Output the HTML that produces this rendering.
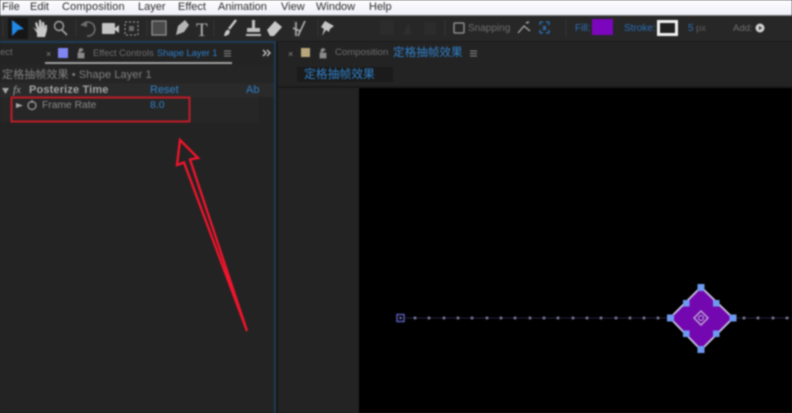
<!DOCTYPE html>
<html>
<head>
<meta charset="utf-8">
<style>
html,body{margin:0;padding:0;width:792px;height:413px;overflow:hidden;background:#232323}
#r{position:relative;width:792px;height:413px;overflow:hidden;background:#232323;font-family:"Liberation Sans","Noto Sans CJK SC",sans-serif;filter:blur(.7px)}
#r div{position:absolute;white-space:nowrap}
.m{top:0;font-size:11px;line-height:15px;color:#2c2c2c}
.g{color:#8b8b8b;font-size:9.5px}
.b{color:#2f7fc8;font-size:10px}
svg{position:absolute;left:0;top:0}
</style>
</head>
<body>
<div id="r">
  <div style="left:0;top:0;width:792px;height:15px;background:linear-gradient(#fdfdfe,#eeeef8)"></div>
  <div style="left:0;top:15px;width:792px;height:1px;background:#777"></div>
  <div style="left:0;top:16px;width:792px;height:25px;background:#272727"></div>

  <div class="m" style="left:2px">File</div>
  <div class="m" style="left:30px">Edit</div>
  <div class="m" style="left:62px;letter-spacing:.15px">Composition</div>
  <div class="m" style="left:138px">Layer</div>
  <div class="m" style="left:178px">Effect</div>
  <div class="m" style="left:218px">Animation</div>
  <div class="m" style="left:281px">View</div>
  <div class="m" style="left:316px">Window</div>
  <div class="m" style="left:369px">Help</div>

  <div style="left:0;top:41px;width:275px;height:2px;background:#1c3c58"></div>
  <div style="left:274px;top:41px;width:2px;height:372px;background:#1c3c58"></div>
  <div style="left:276px;top:41px;width:516px;height:1px;background:#1a1a1a"></div>
  <div style="left:276px;top:42px;width:2px;height:371px;background:#171717"></div>
  <div style="left:278px;top:86px;width:514px;height:2px;background:#1a1a1a"></div>
  <div style="left:359px;top:88px;width:433px;height:325px;background:#000"></div>

  <div class="g" style="left:0;top:47px;color:#6f6f6f;line-height:12px">ect</div>
  <div class="g" style="left:46px;top:48px;font-size:9px;line-height:12px">×</div>
  <div style="left:58px;top:48px;width:10px;height:10px;background:#7f86f2"></div>
  <div class="g" style="left:93px;top:47px;line-height:12px;color:#6e6e6e;font-size:9.3px">Effect Controls</div>
  <div class="b" style="left:157px;top:47px;line-height:12px;font-size:9.3px">Shape Layer 1</div>
  <div style="left:45px;top:62px;width:187px;height:2px;background:#a0a0a0"></div>
  <div style="left:0;top:65px;width:274px;height:18px;background:#252525"></div>
  <div class="g" style="left:2px;top:69px;line-height:13px;font-size:11px;color:#808080;letter-spacing:.1px">定格抽帧效果 • Shape Layer 1</div>
  <div style="left:0;top:83px;width:274px;height:14px;background:#2a2a2a"></div>
  <div style="left:0;top:97px;width:258px;height:25px;background:#262626"></div>
  <div style="left:13px;top:84px;font:italic 11px 'Liberation Serif',serif;line-height:13px;color:#a8a8a8">fx</div>
  <div style="left:29px;top:84px;font-size:11px;font-weight:bold;line-height:13px;color:#a5a5a5;letter-spacing:.15px">Posterize Time</div>
  <div class="b" style="left:150px;top:84px;line-height:13px;font-size:11px">Reset</div>
  <div class="b" style="left:246px;top:84px;line-height:13px;font-size:11px">Ab</div>
  <div class="g" style="left:42px;top:99px;font-size:10.3px;line-height:13px">Frame Rate</div>
  <div class="b" style="left:150px;top:99px;line-height:13px;font-size:10.5px">8.0</div>
  <div class="g" style="left:288px;top:48px;font-size:9px;line-height:12px">×</div>
  <div style="left:301px;top:48px;width:9px;height:9px;background:#b9a67c"></div>
  <div class="g" style="left:335px;top:47px;line-height:12px;color:#6e6e6e;font-size:9.6px">Composition</div>
  <div class="b" style="left:393px;top:46px;line-height:14px;font-size:11.6px">定格抽帧效果</div>
  <div style="left:297px;top:67px;width:96px;height:15px;background:#1b1b1b"></div>
  <div class="b" style="left:304px;top:67px;line-height:14px;font-size:11.8px">定格抽帧效果</div>

  <div class="g" style="left:468px;top:22px;line-height:13px;font-size:10px;color:#6e6e6e">Snapping</div>
  <div class="b" style="left:575px;top:22px;line-height:13px;color:#2a6db5">Fill:</div>
  <div style="left:592px;top:19px;width:21px;height:16px;background:#7b06bd"></div>
  <div class="b" style="left:624px;top:22px;line-height:13px;color:#2a6db5">Stroke:</div>
  <div style="left:657px;top:20px;width:15px;height:10px;border:3px solid #f2f2f2;background:#222"></div>
  <div class="b" style="left:688px;top:22px;line-height:13px;color:#2a6db5">5</div>
  <div class="g" style="left:696px;top:22px;line-height:13px;color:#5e5e5e">px</div>
  <div class="g" style="left:733px;top:22px;line-height:13px;color:#707070">Add:</div>

  <svg width="792" height="413" viewBox="0 0 792 413" fill="none">
    <path d="M3 20V36M76 20V36M147 20V36M214 20V36M294 20V36M318 20V36M445 20V36M566 20V36" stroke="#363636"/>
    <rect x="8" y="18" width="20" height="21" fill="#161616"/>
    <path d="M12 20L24 29L18 30L12 36Z" fill="#2088e6"/>
    <path d="M33 27L37 33V37H45L47 30V25L45 25V29L44 22L42 22V28L41 20H39V28L37 22L35 23L37 30Z" fill="#c9c9c9"/>
    <circle cx="59" cy="26" r="4.5" stroke="#a5a5a5" stroke-width="1.4"/>
    <path d="M62 30L67 35" stroke="#a5a5a5" stroke-width="1.6"/>
    <path d="M83 24A7 7 0 1 1 87 36" stroke="#6e6e6e" stroke-width="1.6"/>
    <path d="M80 25L87 21V27Z" fill="#6e6e6e"/>
    <rect x="102" y="23" width="13" height="11" rx="1" fill="#c5c5c5"/>
    <path d="M115 28L119 25V33L115 30Z" fill="#c5c5c5"/>
    <rect x="125" y="22" width="13" height="13" stroke="#aaa" stroke-dasharray="2 2"/>
    <rect x="129" y="26" width="5" height="5" fill="#6a6a6a"/>
    <rect x="152" y="21" width="14" height="14" fill="#4a4a4a" stroke="#8a8a8a" stroke-width="1.4"/>
    <path d="M176 35L178 26L185 20L189 25L184 32Z" fill="#b5b5b5"/>
    <text x="196" y="36" font-family="Liberation Serif,serif" font-size="19" fill="#b5b5b5">T</text>
    <path d="M236 20L229 29" stroke="#c8c8c8" stroke-width="2.4"/>
    <path d="M224 36C225 31 227 29 229 30C231 32 229 36 224 36Z" fill="#c8c8c8"/>
    <path d="M252 20H255V28H260V32H247V28H252ZM246 34H261V36H246Z" fill="#c0c0c0"/>
    <path d="M267 30L275 21L282 27L274 36H270Z" fill="#c8c8c8"/>
    <path d="M296 22V36M305 21L298 36M293 28L300 31" stroke="#b0b0b0" stroke-width="1.6"/>
    <path d="M325 21L334 26L330 29L329 32L326 30L322 36L324 29L321 27Z" fill="#c5c5c5"/>
    <path d="M408 23L412 35H403Z" fill="#2e2e2e"/>
    <rect x="424" y="22" width="12" height="13" fill="#2c2c2c"/>
    <rect x="380" y="20" width="14" height="15" fill="#2c2c2c"/>
    <rect x="454" y="23" width="10" height="10" rx="1" stroke="#8b8b8b" stroke-width="1.5"/>
    <path d="M518 33L524 26L530 31" stroke="#aaa" stroke-width="1.3"/>
    <path d="M526 23L529 22" stroke="#aaa" stroke-width="1.5"/>
    <path d="M540 22H543M546 22H549M540 33H543M546 33H549M540 22V25M549 22V25M540 30V33M549 30V33M543 26L546 30M546 26L543 30" stroke="#2a74c0" stroke-width="1.3"/>
    <circle cx="760" cy="28" r="4.5" fill="#d0d0d0"/>
    <path d="M759 26L762 28L759 30Z" fill="#333"/>
    <path d="M78 53V58H84V53ZM79 53V50.5A2 2 0 0 1 83 50.5" fill="#8a8a8a" stroke="#8a8a8a" stroke-width=".8"/>
    <path d="M320 53V58H326V53ZM321 53V50.5A2 2 0 0 1 325 50.5" fill="#8a8a8a" stroke="#8a8a8a" stroke-width=".8"/>
    <path d="M224 51H231M224 53.5H231M224 56H231" stroke="#888"/>
    <path d="M470 51H477M470 53.5H477M470 56H477" stroke="#888"/>
    <path d="M263 50L266 53L263 56M267 50L270 53L267 56" stroke="#c5c5c5" stroke-width="1.4"/>
    <path d="M2 88H9L5.500 94Z" fill="#a5a5a5"/>
    <path d="M16 103L23 105.500L16 108Z" fill="#aaa"/>
    <circle cx="32" cy="105.500" r="4" stroke="#999" stroke-width="1.3"/>
    <path d="M32 100V103" stroke="#999" stroke-width="1.3"/>

    <rect x="11.500" y="97.500" width="178" height="24" stroke="#c01c26" stroke-width="2"/>
    <path d="M180 140L198 158L190 159.500L247 331L184 162.500L177 165Z" stroke="#f0142c" stroke-width="2.300" stroke-linejoin="miter"/>

    <path d="M405 318H790" stroke="#23233c" stroke-width="1"/>
    <g fill="#7a7a98">
      <circle cx="415" cy="318" r="1.500"/><circle cx="429" cy="318" r="1.500"/><circle cx="444" cy="318" r="1.500"/><circle cx="458" cy="318" r="1.500"/><circle cx="472" cy="318" r="1.500"/><circle cx="487" cy="318" r="1.500"/><circle cx="501" cy="318" r="1.500"/><circle cx="515" cy="318" r="1.500"/><circle cx="530" cy="318" r="1.500"/><circle cx="544" cy="318" r="1.500"/><circle cx="558" cy="318" r="1.500"/><circle cx="573" cy="318" r="1.500"/><circle cx="587" cy="318" r="1.500"/><circle cx="601" cy="318" r="1.500"/><circle cx="616" cy="318" r="1.500"/><circle cx="630" cy="318" r="1.500"/><circle cx="644" cy="318" r="1.500"/><circle cx="658" cy="318" r="1.500"/><circle cx="744" cy="318" r="1.500"/><circle cx="758" cy="318" r="1.500"/><circle cx="773" cy="318" r="1.500"/><circle cx="787" cy="318" r="1.500"/>
    </g>
    <rect x="397" y="314.500" width="7" height="7" stroke="#5a5ab8" stroke-width="1.500"/>
    <rect x="399.500" y="317" width="2" height="2" fill="#8888cc"/>

    <path d="M701 287L733 318L701 350L670 318Z" fill="#7408b0" stroke="#c8c8e4" stroke-width="1.800"/>
    <g fill="#6f9af0">
      <rect x="697.500" y="284" width="7" height="7"/>
      <rect x="697.500" y="346" width="7" height="7"/>
      <rect x="667" y="314.500" width="7" height="7"/>
      <rect x="729.500" y="314.500" width="7" height="7"/>
      <rect x="683" y="300" width="6.500" height="6.500"/>
      <rect x="713" y="300" width="6.500" height="6.500"/>
      <rect x="683" y="330.500" width="6.500" height="6.500"/>
      <rect x="713" y="330.500" width="6.500" height="6.500"/>
    </g>
    <path d="M701 311L708 318L701 325L694 318Z" stroke="#c8c8d8" stroke-width="1.200"/>
    <circle cx="701" cy="318" r="2.500" stroke="#b8b8d0"/>
  </svg>
</div>
</body>
</html>
